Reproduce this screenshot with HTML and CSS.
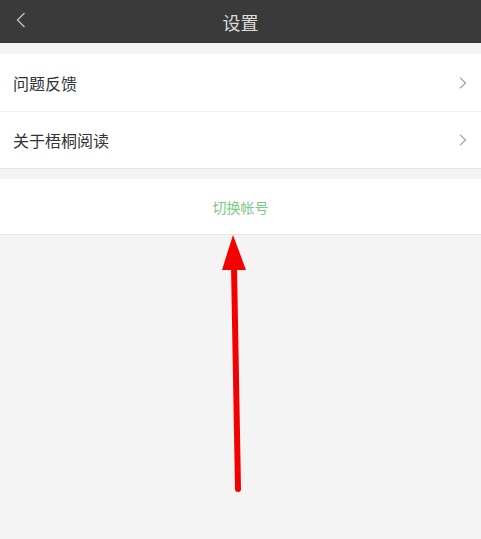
FILE: index.html
```html
<!DOCTYPE html>
<html lang="zh-CN">
<head>
  <meta charset="UTF-8">
  <meta name="viewport" content="width=device-width, initial-scale=1.0">
  <title>设置</title>
  <link rel="stylesheet" href="styles.css">
</head>
<body>
  <header class="topbar">
    <a class="back" href="#">
      <svg width="10" height="16" viewBox="0 0 10 16"><path d="M8.5 1 L1.5 8 L8.5 15" fill="none" stroke="#bdbdbd" stroke-width="1.4"/></svg>
    </a>
    <h1>设置</h1>
  </header>

  <ul class="menu">
    <li class="menu-item">
      <span>问题反馈</span>
      <svg class="arrow" width="8" height="12" viewBox="0 0 8 12"><path d="M1 0.8 L6.5 6 L1 11.2" fill="none" stroke="#a8a8a8" stroke-width="1.3"/></svg>
    </li>
    <li class="menu-item">
      <span>关于梧桐阅读</span>
      <svg class="arrow" width="8" height="12" viewBox="0 0 8 12"><path d="M1 0.8 L6.5 6 L1 11.2" fill="none" stroke="#a8a8a8" stroke-width="1.3"/></svg>
    </li>
  </ul>

  <button class="switch" type="button">切换帐号</button>

  <!-- red pointer drawn over the page -->
  <svg class="pointer" width="481" height="539" viewBox="0 0 481 539">
    <line x1="234" y1="266" x2="238" y2="489" stroke="#f50000" stroke-width="6" stroke-linecap="round"/>
    <polygon points="233,235 222,270 246,270" fill="#f50000"/>
  </svg>
</body>
</html>
```

FILE: styles.css
```css
* {
  box-sizing: border-box;
}
body {
  margin: 0;
  height: 539px;
  background: #f4f4f4;
  font-family: "Noto Sans CJK SC", "Noto Sans", sans-serif;
  position: relative;
  overflow: hidden;
}
.topbar {
  height: 43px;
  background: #3a3a3a;
  display: flex;
  align-items: center;
  justify-content: center;
  position: relative;
}
.topbar h1 {
  margin: 0;
  font-size: 18px;
  font-weight: normal;
  color: #dcdcdc;
  line-height: 1;
}
.back {
  position: absolute;
  left: 16px;
  top: 12px;
  display: flex;
}
.menu {
  list-style: none;
  margin: 11px 0 0;
  padding: 0;
  background: #fff;
  border-bottom: 1px solid #e6e6e6;
}
.menu-item {
  height: 57px;
  padding: 0 14px 0 13px;
  display: flex;
  align-items: center;
  justify-content: space-between;
  font-size: 16px;
  color: #333;
}
.menu-item + .menu-item {
  border-top: 1px solid #f0f0f0;
}
.switch {
  display: block;
  width: 100%;
  height: 56px;
  margin-top: 10px;
  border: none;
  border-bottom: 1px solid #e6e6e6;
  background: #fff;
  font-family: inherit;
  font-size: 14px;
  color: #7ccb86;
  padding: 0;
}
.pointer {
  position: absolute;
  left: 0;
  top: 0;
  pointer-events: none;
}
```
